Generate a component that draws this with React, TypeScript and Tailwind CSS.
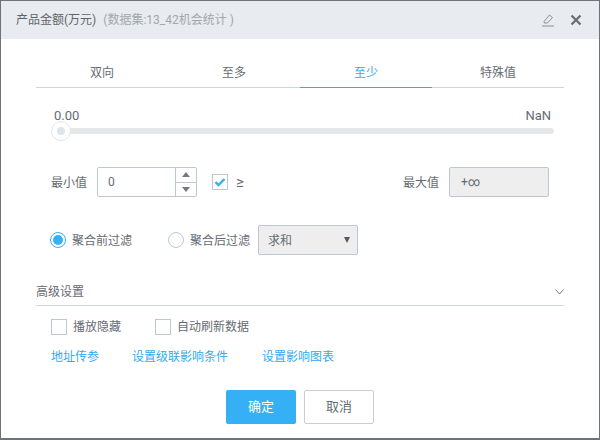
import React from "react";

const Check = ({ checked }: { checked?: boolean }) => (
  <span className="w-4 h-4 border border-[#bcc7d4] flex items-center justify-center shrink-0">
    {checked && (
      <svg width="12" height="10" viewBox="0 0 12 10" fill="none">
        <path d="M1.5 5 L4.5 8 L10.5 2" stroke="#35b0f4" strokeWidth="2.4" />
      </svg>
    )}
  </span>
);

const Tab = ({ label, active }: { label: string; active?: boolean }) => (
  <div
    className={
      "flex-1 h-7 flex items-start justify-center leading-[26px] border-b " +
      (active ? "text-[#35a8ee] border-[#35a8ee]" : "text-[#666b73] border-[#cfd4da]")
    }
  >
    {label}
  </div>
);

export default function App() {
  return (
    <div
      className="w-[600px] h-[440px] bg-white border border-[#6e7279] border-b-2 flex flex-col text-[12px] text-[#666b73] overflow-hidden"
      style={{ fontFamily: '"Roboto", "Noto Sans CJK SC", sans-serif' }}
    >
      <div className="h-[38px] shrink-0 bg-[#e8ebef] flex items-center pl-[15px] pr-[17px]">
        <span className="text-[#5f646b]">产品金额(万元)</span>
        <span className="ml-[7px] text-[#a3a7ad]">(数据集:13_42机会统计 )</span>
        <svg className="ml-auto" width="14" height="14" viewBox="0 0 14 14" fill="none" stroke="#8a8e94" strokeWidth="1">
          <path d="M3 8.5 L8.5 2 L11.5 4.5 L6.5 10 L3.5 10 Z" />
          <path d="M1 13 H13" />
        </svg>
        <svg className="ml-[15px]" width="12" height="12" viewBox="0 0 12 12" fill="none" stroke="#696d73" strokeWidth="2.2">
          <path d="M1.5 1.5 L10.5 10.5 M10.5 1.5 L1.5 10.5" />
        </svg>
      </div>

      <div className="flex-1 flex flex-col px-[35px] pt-[21px]">
        <div className="flex w-[528px]">
          <Tab label="双向" />
          <Tab label="至多" />
          <Tab label="至少" active />
          <Tab label="特殊值" />
        </div>

        <div className="flex justify-between pl-[18px] pr-[13px] mt-[19px] h-[17px] leading-[17px] text-[13px]">
          <span>0.00</span>
          <span>NaN</span>
        </div>
        <div className="-mt-[3px] ml-[15px] w-[503px] h-[20px] flex items-center">
          <span className="w-5 h-5 rounded-full border border-[#e2e6ea] bg-white flex items-center justify-center shrink-0 z-10">
            <span className="w-2 h-2 rounded-full bg-[#dfe4e8]" />
          </span>
          <span className="flex-1 h-[6px] -ml-[9px] rounded-r-[3px] bg-[#e5e8eb]" />
        </div>

        <div className="flex items-center h-[30px] mt-[26px] pl-[15px]">
          <span className="w-[46px] pt-[1px]">最小值</span>
          <div className="w-[100px] h-[30px] border border-[#bcc7d4] rounded-[2px] flex">
            <span className="flex-1 pl-[10px] leading-[29px]">0</span>
            <div className="w-[21px] border-l border-[#bcc7d4] flex flex-col">
              <span className="flex-1 flex items-center justify-center border-b border-[#bcc7d4]">
                <svg width="8" height="5" viewBox="0 0 8 5"><path d="M4 0 L8 5 H0 Z" fill="#75797f" /></svg>
              </span>
              <span className="flex-1 flex items-center justify-center">
                <svg width="8" height="5" viewBox="0 0 8 5"><path d="M0 0 H8 L4 5 Z" fill="#75797f" /></svg>
              </span>
            </div>
          </div>
          <span className="ml-[15px]"><Check checked /></span>
          <span className="ml-2 text-[15px]">≥</span>
          <span className="ml-auto pt-[1px]">最大值</span>
          <div className="ml-[10px] mr-[15px] w-[100px] h-[30px] border border-[#bcc7d4] rounded-[2px] bg-[#eeeeee] pl-[11px] leading-[29px]">
            +∞
          </div>
        </div>

        <div className="flex items-center h-[30px] mt-[28px] pl-[14px]">
          <span className="w-4 h-4 rounded-full border border-[#35b0f4] flex items-center justify-center">
            <span className="w-[10px] h-[10px] rounded-full bg-[#35b0f4]" />
          </span>
          <span className="ml-[6px] pt-[1px]">聚合前过滤</span>
          <span className="ml-[36px] w-4 h-4 rounded-full border border-[#bcc7d4]" />
          <span className="ml-[6px] pt-[1px]">聚合后过滤</span>
          <div className="ml-2 w-[100px] h-[30px] border border-[#bcc7d4] rounded-[2px] bg-[#eeeeee] flex items-center pl-[9px] pr-[6px]">
            <span className="pt-[2px]">求和</span>
            <svg className="ml-auto mr-[1px]" width="6" height="6" viewBox="0 0 6 6"><path d="M0 0 H6 L3 6 Z" fill="#55595f" /></svg>
          </div>
        </div>

        <div className="flex items-center justify-between h-[27px] mt-[24px] border-b border-[#cfd4da]">
          <span className="leading-[16px]">高级设置</span>
          <svg width="9" height="6" viewBox="0 0 9 6" fill="none" stroke="#75797f"><path d="M0.5 0.5 L4.5 5 L8.5 0.5" /></svg>
        </div>

        <div className="flex items-center h-4 mt-[13px] pl-[15px]">
          <Check />
          <span className="ml-[6px]">播放隐藏</span>
          <span className="ml-[34px]"><Check /></span>
          <span className="ml-[6px]">自动刷新数据</span>
        </div>

        <div className="flex items-center mt-[13px] pl-[15px] h-[18px] text-[#35a8ee]">
          <span>地址传参</span>
          <span className="ml-[33px]">设置级联影响条件</span>
          <span className="ml-[34px]">设置影响图表</span>
        </div>

        <div className="flex mt-[24px] ml-[190px] gap-2">
          <div className="w-[70px] h-[34px] bg-[#35b0f4] rounded-[2px] text-white text-[13px] flex items-center justify-center">确定</div>
          <div className="w-[70px] h-[34px] border border-[#c8ced6] rounded-[2px] text-[13px] flex items-center justify-center">取消</div>
        </div>
      </div>
    </div>
  );
}
